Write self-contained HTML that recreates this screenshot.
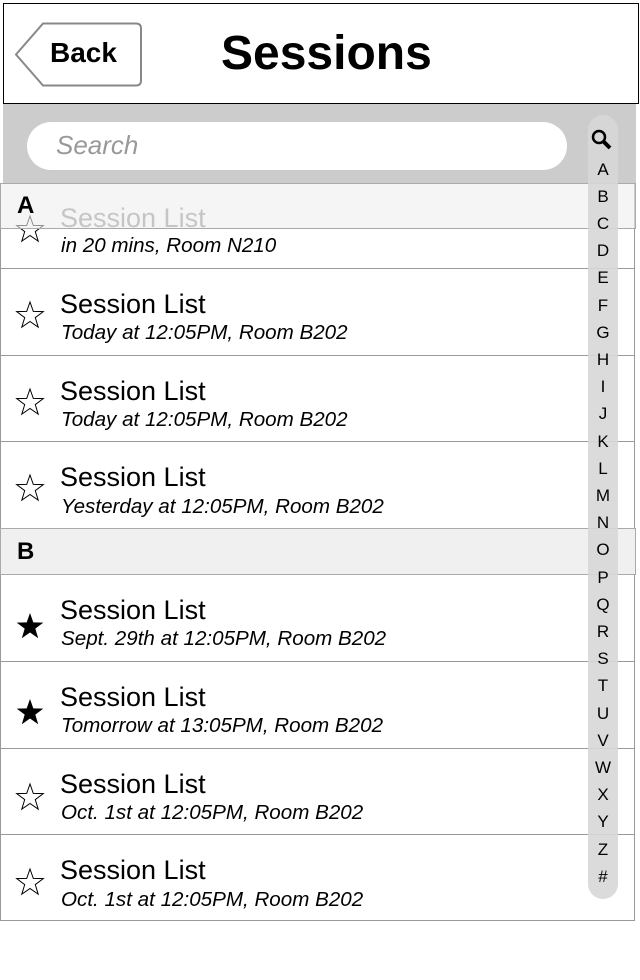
<!DOCTYPE html>
<html><head><style>
body{margin:0;width:640px;height:980px;background:#fff;position:relative;overflow:hidden;font-family:"Liberation Sans",sans-serif}
.a{position:absolute}
.row{position:absolute;left:0;width:635px;border:1px solid #999;border-top:none;background:#fff;box-sizing:border-box}
.t{position:absolute;left:59px;font-size:27px;color:#000;white-space:nowrap}
.s{position:absolute;left:60px;font-size:20.6px;font-style:italic;color:#000;white-space:nowrap}
.st{position:absolute;left:14px;width:30px;height:30px}
.hdr{position:absolute;left:0;width:636px;background:rgba(238,238,238,0.6);border:1px solid #aaa;box-sizing:border-box;font-weight:bold;font-size:24px}
.idx{position:absolute;left:588px;width:30px;text-align:center;font-size:17px;line-height:17px;color:#000}
</style></head><body>
<div class="a" style="left:3px;top:3px;width:634px;height:99px;border:1px solid #000;background:#fff"></div>
<svg class="a" style="left:14px;top:22px" width="130" height="66"><path d="M29 1.5 H122 Q127 1.5 127 6.5 V58.5 Q127 63.5 122 63.5 H29 L2 32.5 Z" fill="#fff" stroke="#888" stroke-width="2"/></svg>
<div class="a" style="left:50px;top:37px;font-size:28px;font-weight:bold">Back</div>
<div class="a" style="left:221px;top:26px;font-size:48px;font-weight:bold">Sessions</div>
<div class="a" style="left:3px;top:104px;width:633px;height:80px;background:#ccc"></div>
<div class="a" style="left:27px;top:122px;width:540px;height:48px;border-radius:24px;background:#fff"></div>
<div class="a" style="left:56px;top:130px;font-size:26px;font-style:italic;color:#999">Search</div>

<div class="row" style="top:183px;height:86px"><div class="t" style="top:20px;color:#888">Session List</div><div class="s" style="top:51px">in 20 mins, Room N210</div>
<svg class="st" style="top:31px" viewBox="0 0 30 30"><path d="M15 2 L18.3 11.4 L28.3 11.6 L20.3 17.6 L23.2 27.2 L15 21.5 L6.8 27.2 L9.7 17.6 L1.7 11.6 L11.7 11.4 Z" fill="none" stroke="#000" stroke-width="1"/></svg></div>
<div class="hdr" style="top:183px;height:46px;padding:8px 0 0 16px">A</div>

<div class="row" style="top:269px;height:87px"><div class="t" style="top:20px">Session List</div><div class="s" style="top:52px">Today at 12:05PM, Room B202</div>
<svg class="st" style="top:31px" viewBox="0 0 30 30"><path d="M15 2 L18.3 11.4 L28.3 11.6 L20.3 17.6 L23.2 27.2 L15 21.5 L6.8 27.2 L9.7 17.6 L1.7 11.6 L11.7 11.4 Z" fill="none" stroke="#000" stroke-width="1"/></svg></div>
<div class="row" style="top:356px;height:86px"><div class="t" style="top:20px">Session List</div><div class="s" style="top:52px">Today at 12:05PM, Room B202</div>
<svg class="st" style="top:31px" viewBox="0 0 30 30"><path d="M15 2 L18.3 11.4 L28.3 11.6 L20.3 17.6 L23.2 27.2 L15 21.5 L6.8 27.2 L9.7 17.6 L1.7 11.6 L11.7 11.4 Z" fill="none" stroke="#000" stroke-width="1"/></svg></div>
<div class="row" style="top:442px;height:87px"><div class="t" style="top:20px">Session List</div><div class="s" style="top:53px">Yesterday at 12:05PM, Room B202</div>
<svg class="st" style="top:31px" viewBox="0 0 30 30"><path d="M15 2 L18.3 11.4 L28.3 11.6 L20.3 17.6 L23.2 27.2 L15 21.5 L6.8 27.2 L9.7 17.6 L1.7 11.6 L11.7 11.4 Z" fill="none" stroke="#000" stroke-width="1"/></svg></div>
<div class="hdr" style="top:528px;height:47px;padding:9px 0 0 16px;background:#f0f0f0">B</div>

<div class="row" style="top:575px;height:87px"><div class="t" style="top:20px">Session List</div><div class="s" style="top:52px">Sept. 29th at 12:05PM, Room B202</div>
<svg class="st" style="top:36px" viewBox="0 0 30 30"><path d="M15 2 L18.3 11.4 L28.3 11.6 L20.3 17.6 L23.2 27.2 L15 21.5 L6.8 27.2 L9.7 17.6 L1.7 11.6 L11.7 11.4 Z" fill="#000"/></svg></div>
<div class="row" style="top:662px;height:87px"><div class="t" style="top:20px">Session List</div><div class="s" style="top:52px">Tomorrow at 13:05PM, Room B202</div>
<svg class="st" style="top:35px" viewBox="0 0 30 30"><path d="M15 2 L18.3 11.4 L28.3 11.6 L20.3 17.6 L23.2 27.2 L15 21.5 L6.8 27.2 L9.7 17.6 L1.7 11.6 L11.7 11.4 Z" fill="#000"/></svg></div>
<div class="row" style="top:749px;height:86px"><div class="t" style="top:20px">Session List</div><div class="s" style="top:52px">Oct. 1st at 12:05PM, Room B202</div>
<svg class="st" style="top:33px" viewBox="0 0 30 30"><path d="M15 2 L18.3 11.4 L28.3 11.6 L20.3 17.6 L23.2 27.2 L15 21.5 L6.8 27.2 L9.7 17.6 L1.7 11.6 L11.7 11.4 Z" fill="none" stroke="#000" stroke-width="1"/></svg></div>
<div class="row" style="top:835px;height:86px"><div class="t" style="top:20px">Session List</div><div class="s" style="top:53px">Oct. 1st at 12:05PM, Room B202</div>
<svg class="st" style="top:32px" viewBox="0 0 30 30"><path d="M15 2 L18.3 11.4 L28.3 11.6 L20.3 17.6 L23.2 27.2 L15 21.5 L6.8 27.2 L9.7 17.6 L1.7 11.6 L11.7 11.4 Z" fill="none" stroke="#000" stroke-width="1"/></svg></div>

<div class="a" style="left:588px;top:115px;width:30px;height:784px;border-radius:15px;background:rgba(215,215,215,0.9)"></div>
<svg class="a" style="left:590px;top:128px" width="24" height="24"><circle cx="9" cy="9" r="6" fill="none" stroke="#000" stroke-width="2.5"/><path d="M13 13 L20 20" stroke="#000" stroke-width="4"/></svg>
<div class="idx" style="top:161px">A</div><div class="idx" style="top:188px">B</div><div class="idx" style="top:215px">C</div><div class="idx" style="top:242px">D</div><div class="idx" style="top:269px">E</div><div class="idx" style="top:297px">F</div><div class="idx" style="top:324px">G</div><div class="idx" style="top:351px">H</div><div class="idx" style="top:378px">I</div><div class="idx" style="top:405px">J</div><div class="idx" style="top:433px">K</div><div class="idx" style="top:460px">L</div><div class="idx" style="top:487px">M</div><div class="idx" style="top:514px">N</div><div class="idx" style="top:541px">O</div><div class="idx" style="top:569px">P</div><div class="idx" style="top:596px">Q</div><div class="idx" style="top:623px">R</div><div class="idx" style="top:650px">S</div><div class="idx" style="top:677px">T</div><div class="idx" style="top:705px">U</div><div class="idx" style="top:732px">V</div><div class="idx" style="top:759px">W</div><div class="idx" style="top:786px">X</div><div class="idx" style="top:813px">Y</div><div class="idx" style="top:841px">Z</div><div class="idx" style="top:868px">#</div>
</body></html>
